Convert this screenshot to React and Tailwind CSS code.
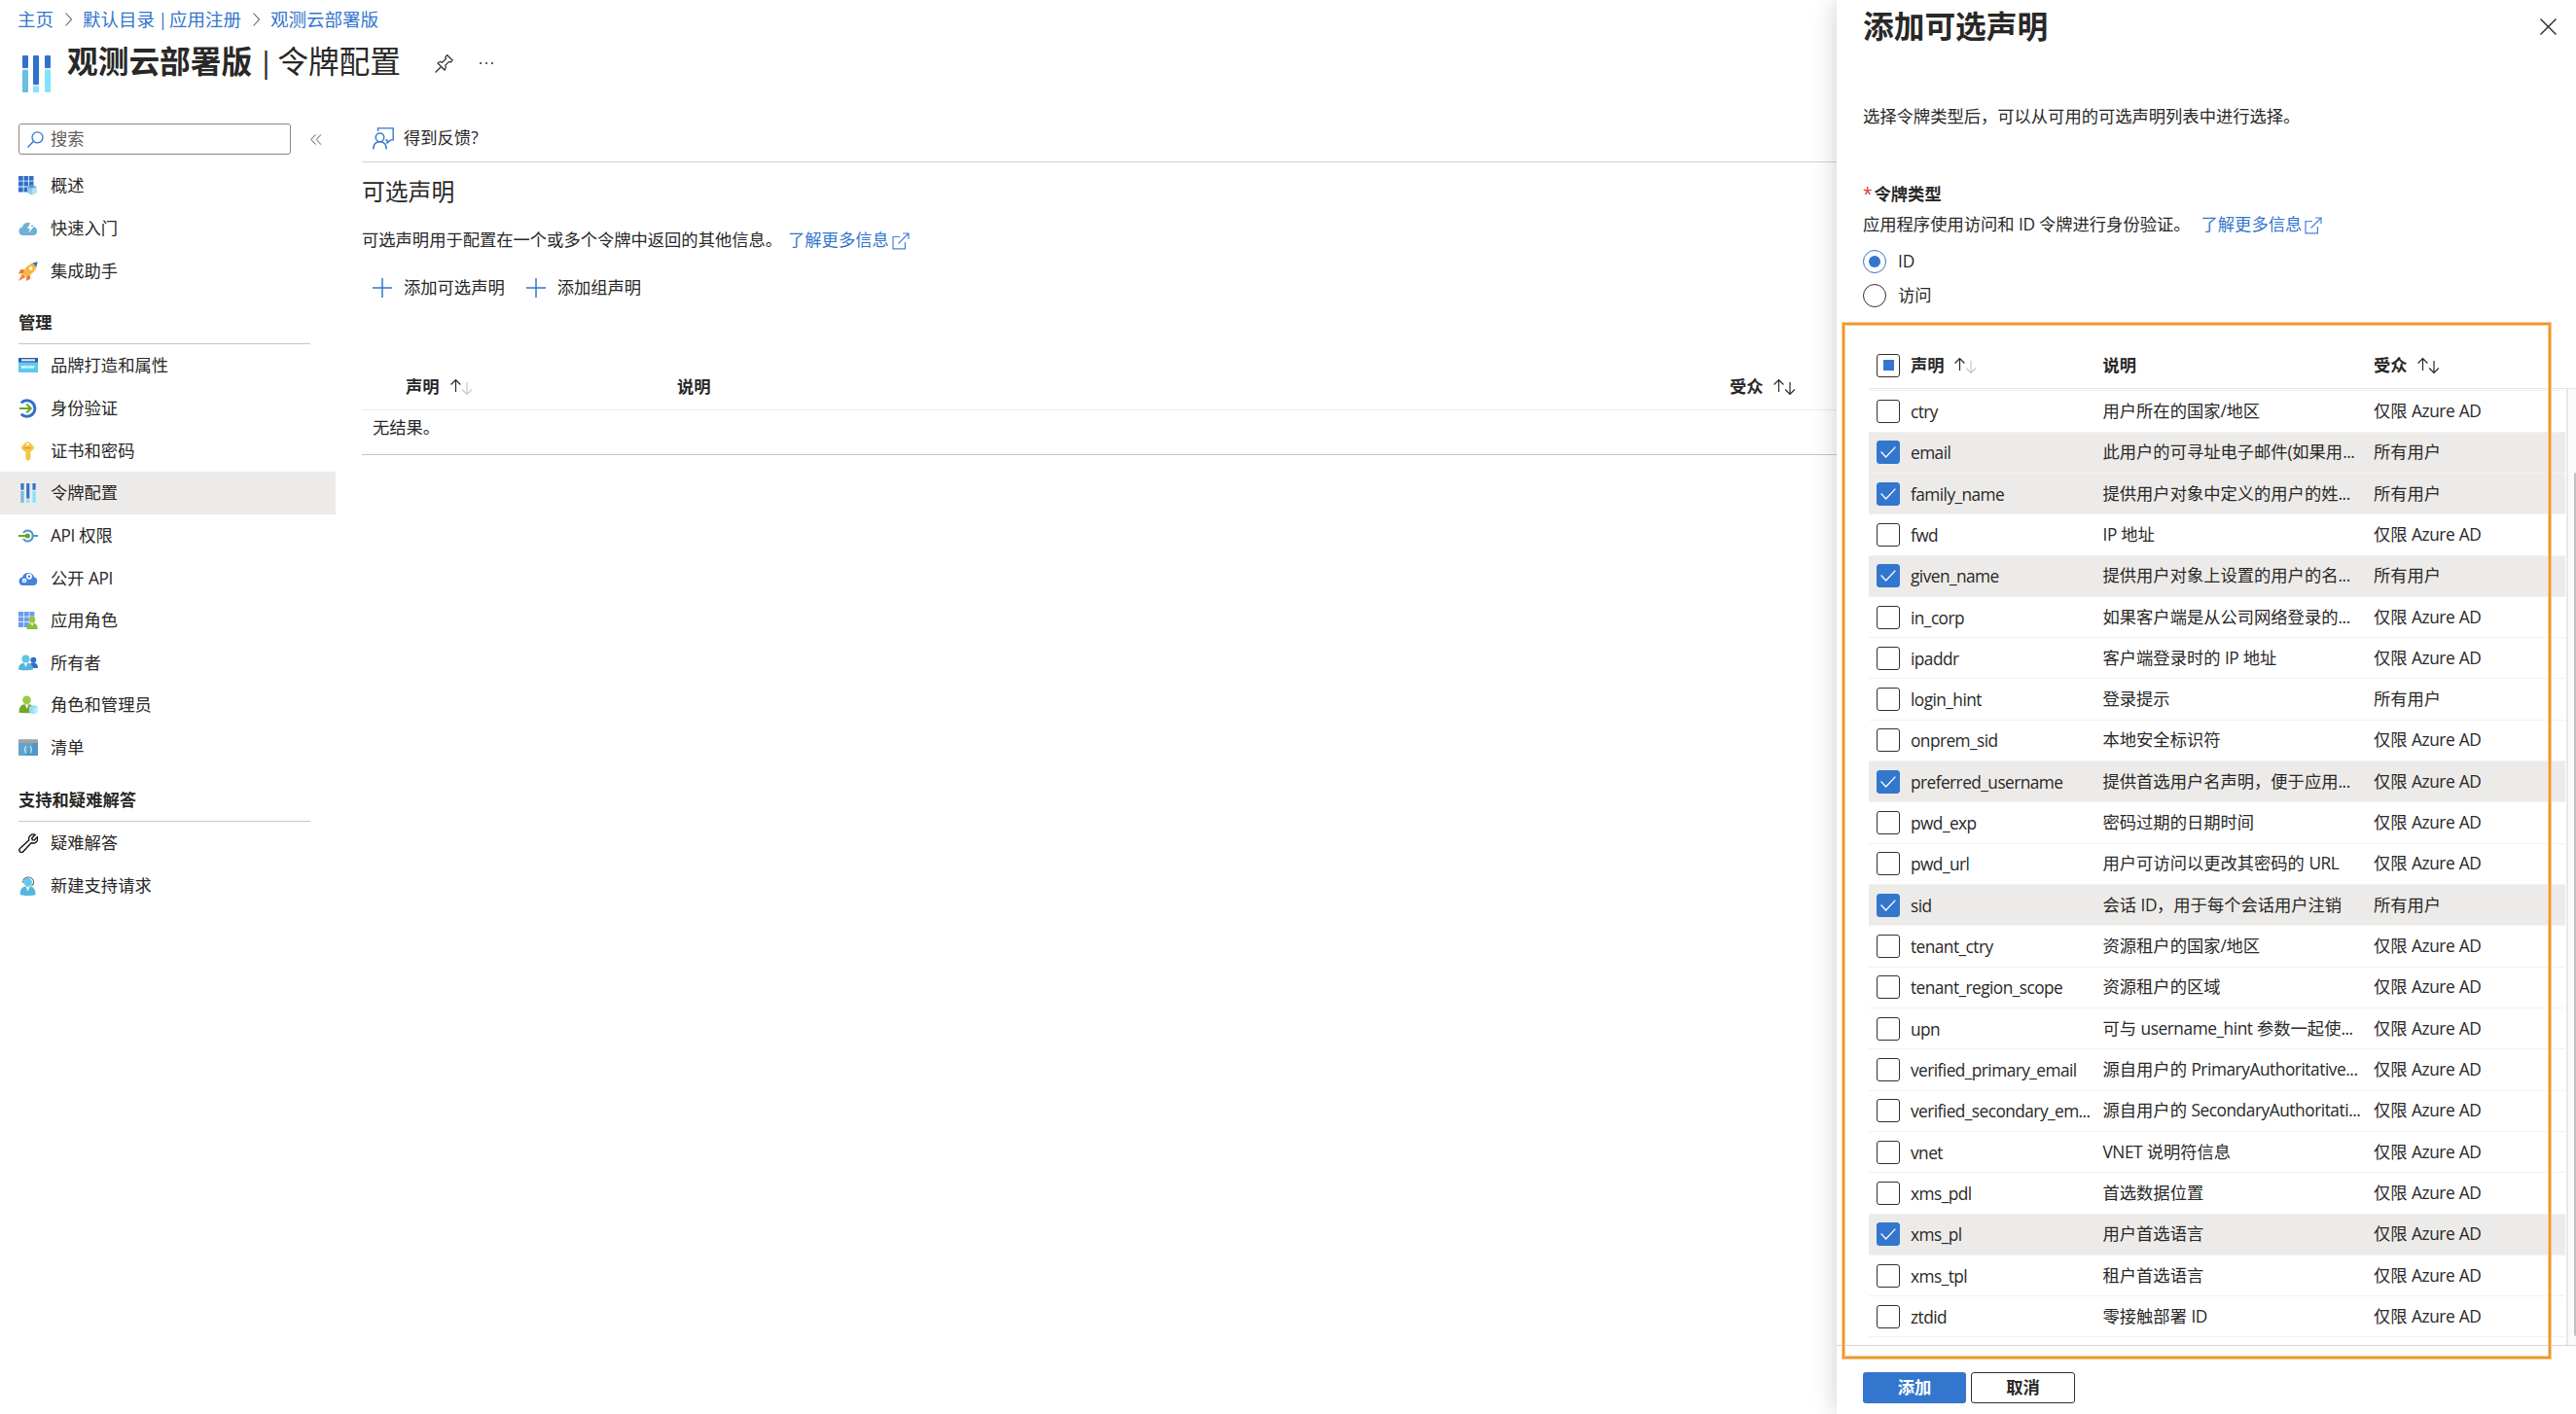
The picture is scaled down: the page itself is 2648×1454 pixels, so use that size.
import { useState } from 'react'

const FONT = "font-['Open_Sans','Noto_Sans_CJK_SC',sans-serif]"

/* ---------- icons ---------- */

const SlidersIcon = ({ className }) => (
  <svg viewBox="0 0 29 38" className={className}>
    <rect x="0" y="0" width="6" height="13" rx="1" fill="#2f72cb" />
    <rect x="11" y="0" width="6" height="30" rx="1" fill="#2f72cb" />
    <rect x="23" y="0" width="6" height="13" rx="1" fill="#2f72cb" />
    <rect x="0" y="15" width="6" height="23" rx="1" fill="#68bfe0" />
    <rect x="11" y="32" width="6" height="6" rx="1" fill="#7fe3fb" />
    <rect x="23" y="15" width="6" height="23" rx="1" fill="#7fe3fb" />
    <path d="M0 13.5h6v1.5H0zM10.500 30h7v2h-7zM23 13.500h6v1.500h-6z" fill="#dfe3e8" />
  </svg>
)

const OverviewIcon = () => (
  <svg viewBox="0 0 20 20" className="size-5">
    <path d="M0 0h4.700v4.700H0zM5.500 0h4.700v4.700H5.500zM11 0h4.500v4.700H11zM0 5.600h4.700v4.900H0zM5.500 5.600h4.700v4.900H5.500zM11 5.600h4.500v4.900H11zM0 11.400h4.700v5H0zM5.500 11.400h4.700v5H5.500z" fill="#2f6fc9" />
    <path d="M13.800 9.200 18.600 11v6L13.800 19.500 9 17v-6z" fill="#8cc8e4" />
    <path d="M13.800 9.200 18.600 11l-4.800 2L9 11z" fill="#5aa3d0" />
    <path d="M13.800 13 18.600 11v6l-4.800 2.500z" fill="#b5dff0" />
  </svg>
)

const QuickstartIcon = () => (
  <svg viewBox="0 0 20 20" className="size-5">
    <path d="M4.500 17a4.300 4.300 0 0 1-.6-8.500A6 6 0 0 1 15.300 8 4.600 4.600 0 0 1 15.600 17z" fill="#6fb1d6" />
    <path d="M13 3 9 10h2.700l-1.200 4.500L15.800 8H13l2-5z" fill="#fff" />
  </svg>
)

const RocketIcon = () => (
  <svg viewBox="0 0 20 20" className="size-5">
    <path d="M7 8.500 2.500 8 0 12.500l5-.5zM11.500 13l.8 4.500L8 20l.3-5z" fill="#e8762c" />
    <path d="M4 12 0 20l7.500-4z" fill="#f08a3c" />
    <path d="M4.500 12.500C6 6.500 11 1.500 19.500.300 19 8.500 14 13.500 8 15.800z" fill="#f5b83d" />
    <path d="M14.500 1.600 19.500.300 18.400 5.500z" fill="#2f6fc9" />
    <circle cx="12.700" cy="7" r="1.900" fill="#fdf3e0" />
  </svg>
)

const BrandingIcon = () => (
  <svg viewBox="0 0 20 20" className="size-5">
    <path d="M0 2h20v5H0z" fill="#2b5faa" />
    <path d="M3 3.300h14v2H3z" fill="#e6eefb" />
    <path d="M0 6.500h20V17H0z" fill="#5ec9ee" />
    <path d="m2.800 9.800 1.300 3 1-2.500 1 2.500 1.200-3 1.200 3 1-2.500 1 2.500 1.200-3 1.200 3 1-2.500 1 2.500 1.300-3" fill="none" stroke="#fff" strokeWidth=".9" />
  </svg>
)

const AuthIcon = () => (
  <svg viewBox="0 0 20 20" className="size-5" fill="none">
    <path d="M2.800 4.300A8.200 8.200 0 1 1 2.800 15.700" stroke="#2f6fc9" strokeWidth="3" />
    <path d="M1 10h11.500M8.300 5.500 12.800 10l-4.500 4.500" stroke="#6aa329" strokeWidth="2" />
  </svg>
)

const KeyIcon = () => (
  <svg viewBox="0 0 20 20" className="size-5">
    <path d="M9.500 0c1 0 6.500 4.800 6.500 6.200 0 1.600-2.500 3.600-4 4.600v1l1 1-1 1.200 1 1.200-1 1.200.9 1.100L9.800 20 7.500 18v-7.200C5.500 9.800 3 7.800 3 6.200 3 4.800 8.500 0 9.500 0z" fill="#f6c445" />
    <circle cx="9.500" cy="2.800" r="1.300" fill="#fff" />
    <path d="M6 6h7v1.300H6z" fill="#dd9d2b" />
  </svg>
)

const ApiPermIcon = () => (
  <svg viewBox="0 0 20 20" className="size-5" fill="none">
    <path d="M5 7a5.200 5.200 0 0 1 9.600 3A5.200 5.200 0 0 1 5 13M14.800 10H20" stroke="#4a98cc" strokeWidth="2" />
    <path d="M0 10h8" stroke="#6aa329" strokeWidth="2" />
    <circle cx="9.300" cy="10" r="2.600" fill="#6aa329" />
  </svg>
)

const ExposeApiIcon = () => (
  <svg viewBox="0 0 20 20" className="size-5">
    <path d="M4.500 17A4.300 4.300 0 0 1 4 8.500 6.300 6.300 0 0 1 16 8.300 4.500 4.500 0 0 1 15.800 17z" fill="#4583dc" />
    <circle cx="11" cy="7.800" r="2.100" fill="none" stroke="#fff" strokeWidth="1.700" />
    <circle cx="6" cy="12" r="1.600" fill="none" stroke="#fff" strokeWidth="1.500" />
  </svg>
)

const AppRolesIcon = () => (
  <svg viewBox="0 0 20 20" className="size-5">
    <path d="M0 1h5v4.800H0zM5.700 1h5v4.800h-5zM11.400 1h5v4.800h-5zM0 6.500h5v4.800H0zM5.700 6.500h5v4.800h-5zM11.400 6.500h5v4.800h-5zM0 12h5v5H0zM5.700 12h5v5h-5z" fill="#6b9ceb" />
    <circle cx="14" cy="9.300" r="3.200" fill="#8fc93a" />
    <path d="M8.500 19c0-4.500 2-6.800 5.500-6.800s5.700 2.300 5.700 6.800z" fill="#86bf34" />
    <path d="m12.300 12.500 1.800 3.500 1.700-3.500z" fill="#eef7dd" />
  </svg>
)

const OwnersIcon = () => (
  <svg viewBox="0 0 20 20" className="size-5">
    <circle cx="15.300" cy="6.800" r="3" fill="#2f6fc9" />
    <path d="M10.500 15c0-3.600 1.600-5.400 4.700-5.400S20 11.400 20 15z" fill="#2f6fc9" />
    <circle cx="7.500" cy="5.500" r="4" fill="#5fc5ea" />
    <path d="M0 16.500C0 12 2.500 9.500 7.500 9.500s7.500 2.500 7.500 7c-1 1-14 1-15 0z" fill="#55b4dc" />
    <path d="m5.500 9.500 2 4.500 2-4.500z" fill="#eaf7fc" />
  </svg>
)

const RolesIcon = () => (
  <svg viewBox="0 0 20 20" className="size-5">
    <circle cx="8.500" cy="4.800" r="4.400" fill="#9acb45" />
    <path d="M.5 17.500c0-5.500 2-8.500 8-8.500s7.500 3 7.500 8.500c-1 1-14.500 1-15.500 0z" fill="#76a52c" />
    <path d="M6.500 9.300 8.600 14l2.100-4.700z" fill="#eef5df" />
    <path d="m15.500 10 4.500 1.800v5.400L15.500 19.500 11 17.200v-5.400z" fill="#8fe0f6" />
    <path d="M15.500 13.800 20 11.800v5.400l-4.500 2.300z" fill="#b9eefb" />
  </svg>
)

const ManifestIcon = () => (
  <svg viewBox="0 0 20 20" className="size-5">
    <path d="M0 1.500h20V18H0z" fill="#5296c6" />
    <path d="M0 1.500h20v3.500H0z" fill="#a3a3a3" />
    <path d="M0 5h15L7 18H0z" fill="#61a4d2" />
    <path d="M8 8.500c-1.500 0-.8 1.200-.9 2.200 0 .8-.6 1-1.100 1 .5 0 1.100.3 1.100 1.100.1 1-.6 2.200.9 2.200M12 8.500c1.500 0 .8 1.200.9 2.200 0 .8.600 1 1.100 1-.5 0-1.100.3-1.100 1.100-.1 1 .6 2.200-.9 2.200" fill="none" stroke="#fff" />
  </svg>
)

const WrenchIcon = () => (
  <svg viewBox="0 0 20 20" className="size-5" fill="none" stroke="#111" strokeWidth="1.400">
    <path d="M17.200 1.300 13.800 4.700l.4 1.900 1.900.4 3.200-3.300c.9 2.600-.2 5.200-2.600 6.100-1.200.4-2.300.3-3.400-.2L4.800 18.700a2.200 2.200 0 0 1-3.300 0 2.200 2.200 0 0 1 0-3.300l9.200-8.500c-.8-3.700 2.500-7.100 6.500-5.600z" />
  </svg>
)

const SupportIcon = () => (
  <svg viewBox="0 0 20 20" className="size-5">
    <path d="M4.500 7C3.800-.8 15.300-1 15.600 6.300c0 2-.8 3.200-2.600 3.500" fill="none" stroke="#6b6b6b" strokeWidth="1.100" />
    <circle cx="9.600" cy="6" r="4.300" fill="#5fc8ee" />
    <path d="M1.700 19c0-6.500 2.500-8.700 8-8.700s7.800 2.200 7.800 8.700c-1 1.300-15 1.300-15.800 0z" fill="#54b7de" />
    <path d="m7.600 10.800 2 5 2.100-5z" fill="#eaf7fc" />
  </svg>
)

const ExternalIcon = () => (
  <svg viewBox="0 0 18 18" className="mt-0.5 size-[18px]" fill="none" stroke="#4a80d8" strokeWidth="1.200">
    <path d="M8 4.500H1v12.400h12.400V10M11 1h6v6M17 1 6.500 11.500" />
  </svg>
)

const SortIcon = ({ down = '#292827' }) => (
  <svg viewBox="0 0 22 18" className="h-[18px] w-[22px]" fill="none" strokeWidth="1.200">
    <path d="M5.500 14V1.500M.6 6.500l4.900-5 4.900 5" stroke="#292827" />
    <path d="M17 4v12.500M12.100 11.500l4.900 5 4.900-5" stroke={down} />
  </svg>
)

const PlusIcon = () => (
  <svg viewBox="0 0 20 20" className="size-5" fill="none" stroke="#3376cd" strokeWidth="1.500">
    <path d="M10 0v20M0 10h20" />
  </svg>
)

const ChevronIcon = () => (
  <svg viewBox="0 0 7 14" className="h-[14px] w-[7px]" fill="none" stroke="#605e5c" strokeWidth="1.100">
    <path d="m.5.500 6 6.500-6 6.500" />
  </svg>
)

/* ---------- data ---------- */

const topItems = [
  { label: '概述', Icon: OverviewIcon },
  { label: '快速入门', Icon: QuickstartIcon },
  { label: '集成助手', Icon: RocketIcon },
]

const manageItems = [
  { label: '品牌打造和属性', Icon: BrandingIcon },
  { label: '身份验证', Icon: AuthIcon },
  { label: '证书和密码', Icon: KeyIcon },
  { label: '令牌配置', Icon: () => <SlidersIcon className="ml-0.5 h-5 w-4" />, active: true },
  { label: 'API 权限', Icon: ApiPermIcon },
  { label: '公开 API', Icon: ExposeApiIcon },
  { label: '应用角色', Icon: AppRolesIcon },
  { label: '所有者', Icon: OwnersIcon },
  { label: '角色和管理员', Icon: RolesIcon },
  { label: '清单', Icon: ManifestIcon },
]

const supportItems = [
  { label: '疑难解答', Icon: WrenchIcon },
  { label: '新建支持请求', Icon: SupportIcon },
]

const AAD = '仅限 Azure AD'
const ALL = '所有用户'

const claims = [
  ['ctry', '用户所在的国家/地区', AAD],
  ['email', '此用户的可寻址电子邮件(如果用...', ALL],
  ['family_name', '提供用户对象中定义的用户的姓...', ALL],
  ['fwd', 'IP 地址', AAD],
  ['given_name', '提供用户对象上设置的用户的名...', ALL],
  ['in_corp', '如果客户端是从公司网络登录的...', AAD],
  ['ipaddr', '客户端登录时的 IP 地址', AAD],
  ['login_hint', '登录提示', ALL],
  ['onprem_sid', '本地安全标识符', AAD],
  ['preferred_username', '提供首选用户名声明，便于应用...', AAD],
  ['pwd_exp', '密码过期的日期时间', AAD],
  ['pwd_url', '用户可访问以更改其密码的 URL', AAD],
  ['sid', '会话 ID，用于每个会话用户注销', ALL],
  ['tenant_ctry', '资源租户的国家/地区', AAD],
  ['tenant_region_scope', '资源租户的区域', AAD],
  ['upn', '可与 username_hint 参数一起使...', AAD],
  ['verified_primary_email', '源自用户的 PrimaryAuthoritative...', AAD],
  ['verified_secondary_em...', '源自用户的 SecondaryAuthoritati...', AAD],
  ['vnet', 'VNET 说明符信息', AAD],
  ['xms_pdl', '首选数据位置', AAD],
  ['xms_pl', '用户首选语言', AAD],
  ['xms_tpl', '租户首选语言', AAD],
  ['ztdid', '零接触部署 ID', AAD],
]

/* ---------- pieces ---------- */

function Mixed({ text }) {
  return (
    <span className="whitespace-pre">
      {text.split(/([\x21-\x7e]+)/).map((part, i) =>
        i % 2 ? <span key={i} className="tracking-[-0.45px]">{part}</span> : part
      )}
    </span>
  )
}

function NavGroup({ items }) {
  return items.map(({ label, Icon, active }) => (
    <a
      key={label}
      className={`flex h-[43.64px] items-center pl-[19px] pt-px ${active ? 'bg-[#edebe9]' : ''}`}
    >
      <span className="flex w-[33px] items-center"><Icon /></span>
      <Mixed text={label} />
    </a>
  ))
}

function NavHeading({ children }) {
  return (
    <div className="ml-[19px] flex h-[54.300px] w-[300px] items-center border-b border-[#c8c6c4] pt-[11px] font-semibold">
      {children}
    </div>
  )
}

function Checkbox({ checked, mixed, onClick }) {
  return (
    <button
      onClick={onClick}
      className={`flex size-6 shrink-0 items-center justify-center rounded-[3px] border ${
        checked ? 'border-[#3376cd] bg-[#3376cd]' : 'border-[#323130] bg-white'
      }`}
    >
      {checked && (
        <svg viewBox="0 0 16 12" className="h-3 w-4" fill="none" stroke="#fff" strokeWidth="1.300">
          <path d="m.6 5.500 5 5.500L15.400.600" />
        </svg>
      )}
      {mixed && <span className="size-[11px] bg-[#3376cd]" />}
    </button>
  )
}

function LearnMore() {
  return (
    <a className="flex items-center gap-[3px] text-[#3376cd]">
      了解更多信息
      <ExternalIcon />
    </a>
  )
}

function Radio({ checked, label, onClick }) {
  return (
    <button onClick={onClick} className="flex h-[34.400px] items-center gap-3">
      <span
        className={`flex size-6 items-center justify-center rounded-full border ${
          checked ? 'border-[#3376cd]' : 'border-[#323130]'
        }`}
      >
        {checked && <span className="size-3 rounded-full bg-[#3376cd]" />}
      </span>
      {label}
    </button>
  )
}

function Sidebar() {
  return (
    <nav className="w-[345px] shrink-0">
      <div className="mt-[11px] flex h-8 items-center pl-[19px]">
        <div className="flex h-8 w-[280px] items-center rounded-[3px] border border-[#8a8886] pl-2 text-[#605e5c]">
          <svg viewBox="0 0 17 17" className="mr-[7px] size-[17px]" fill="none" stroke="#3376cd" strokeWidth="1.300">
            <circle cx="10.500" cy="6.300" r="5.500" />
            <path d="m6.500 10.300-6 6.200" />
          </svg>
          搜索
        </div>
        <svg viewBox="0 0 12 11" className="ml-5 h-[11px] w-3" fill="none" stroke="#605e5c" strokeWidth="1">
          <path d="M5.500.300.800 5.500l4.700 5.200M11 .300 6.300 5.500l4.700 5.200" />
        </svg>
      </div>
      <div className="pt-[10px]">
        <NavGroup items={topItems} />
        <NavHeading>管理</NavHeading>
        <NavGroup items={manageItems} />
        <NavHeading>支持和疑难解答</NavHeading>
        <NavGroup items={supportItems} />
      </div>
    </nav>
  )
}

function Main() {
  return (
    <main className="ml-[27px] min-w-0 flex-1">
      <div className="flex h-[51px] items-center border-b border-[#d2d0ce] pl-[11px] pt-[2px]">
        <svg viewBox="0 0 22 23" className="mr-2.5 h-[23px] w-[22px]" fill="none" stroke="#3376cd" strokeWidth="1.400">
          <path d="M5.500 4V.900h15.700v12h-2.500L15 16v-3.100h-1.800" />
          <circle cx="7.500" cy="10.300" r="4.300" />
          <path d="M.8 22.600c0-5 2.700-7.800 6.700-7.800s6.700 2.800 6.700 7.800" />
        </svg>
        得到反馈?
      </div>
      <h2 className="mt-[12px] text-[23.800px] leading-9">可选声明</h2>
      <div className="mt-[18px] flex h-7 items-center">
        可选声明用于配置在一个或多个令牌中返回的其他信息。
        <span className="w-[6px]" />
        <LearnMore />
      </div>
      <div className="mt-[21px] flex h-7 items-center pl-[11px]">
        <PlusIcon />
        <span className="ml-3">添加可选声明</span>
        <span className="w-[22px]" />
        <PlusIcon />
        <span className="ml-3">添加组声明</span>
      </div>
      <div className="mt-[64px] flex h-[48px] items-center border-b border-[#edebe9] pl-[45px] font-semibold">
        <div className="flex w-[279px] items-center gap-[11px]">声明 <SortIcon down="#c8c6c4" /></div>
        <div className="w-[1082px]">说明</div>
        <div className="flex items-center gap-[10px]">受众 <SortIcon /></div>
      </div>
      <div className="flex h-[46px] items-center border-b border-[#c8c6c4] pb-[9px] pl-[11px]">无结果。</div>
    </main>
  )
}

function ClaimsPanel() {
  const [tokenType, setTokenType] = useState('ID')
  const [selected, setSelected] = useState([
    'email', 'family_name', 'given_name', 'preferred_username', 'sid', 'xms_pl',
  ])

  const toggle = (name) =>
    setSelected(selected.includes(name) ? selected.filter((n) => n !== name) : [...selected, name])

  return (
    <aside className="relative flex h-[1454px] w-[760px] shrink-0 flex-col bg-white shadow-[0_0_24px_rgba(0,0,0,0.2)]">
      <div className="flex h-[54px] items-center justify-between pl-[27px] pr-5">
        <h1 className="text-[31.700px] font-semibold">添加可选声明</h1>
        <svg viewBox="0 0 17 17" className="size-[17px]" fill="none" stroke="#292827" strokeWidth="1.400">
          <path d="m.5.500 16 16M16.500.500l-16 16" />
        </svg>
      </div>

      <div className="flex h-[198px] flex-col pl-[27px] pt-[52px]">
        <p className="h-7 leading-7">选择令牌类型后，可以从可用的可选声明列表中进行选择。</p>
        <p className="mt-[52px] flex h-7 items-center gap-[2px] font-semibold">
          <span className="font-normal text-[#e3342f]">*</span>令牌类型
        </p>
        <div className="mt-[3px] flex h-7 items-center">
          <Mixed text="应用程序使用访问和 ID 令牌进行身份验证。" />
          <span className="w-[11px]" />
          <LearnMore />
        </div>
      </div>
      <div className="flex h-[80px] flex-col items-start pl-[27px]">
        <Radio checked={tokenType === 'ID'} label="ID" onClick={() => setTokenType('ID')} />
        <Radio checked={tokenType === 'access'} label="访问" onClick={() => setTokenType('access')} />
      </div>

      <div className="ml-[33px] flex h-[68px] items-center border-b border-[#e6e6e6] pl-2 pt-[20px] font-semibold">
        <Checkbox mixed />
        <div className="ml-[11px] flex w-[197.500px] items-center gap-[10px]">声明 <SortIcon down="#c8c6c4" /></div>
        <div className="w-[278.500px]">说明</div>
        <div className="flex items-center gap-[10px]">受众 <SortIcon /></div>
      </div>

      <div className="flex h-[984px] border-b border-[#d6d6d6] pl-[33px]">
        <div className="mt-[1.300px] w-[716px] border-t border-[#f3f2f1]">
          {claims.map(([name, desc, audience]) => {
            const on = selected.includes(name)
            return (
              <div
                key={name}
                className={`flex h-[42.320px] items-center whitespace-nowrap border-b border-[#f3f2f1] pl-2 ${on ? 'bg-[#edebe9]' : ''}`}
              >
                <Checkbox checked={on} onClick={() => toggle(name)} />
                <div className="ml-[11px] w-[197.500px] pt-[2px] tracking-[-0.55px]">{name}</div>
                <div className="w-[278.500px]"><Mixed text={desc} /></div>
                <div><Mixed text={audience} /></div>
              </div>
            )
          })}
        </div>
        <div className="ml-px flex-1 border-l-2 border-[#e8e8e8] bg-[#fafafa] pl-[6px]">
          <div className="mt-[86px] h-[888px] rounded-l-full bg-[#c1c1c1]" />
        </div>
      </div>

      <div className="flex gap-[5px] pl-[27px] pt-[27px] font-semibold">
        <button className="h-8 w-[106px] rounded-[3px] bg-[#3376cd] text-white">添加</button>
        <button className="h-8 w-[107px] rounded-[3px] border border-[#323130]">取消</button>
      </div>

      {/* highlight frame around the claims list */}
      <div className="pointer-events-none absolute left-[6px] top-[332px] h-[1065px] w-[728px] border-2 border-[#ef9634] shadow-[0_0_0_1px_#f9c88a,inset_0_0_0_1px_#f9c88a]" />
    </aside>
  )
}

export default function App() {
  return (
    <div className={`flex h-[1454px] w-[2648px] overflow-hidden bg-white text-[17.300px] leading-6 text-[#292827] ${FONT}`}>
      <div className="flex min-w-0 flex-1 flex-col">
        <div className="flex h-[39px] items-center pl-[18px] text-[18.500px] text-[#3376cd]">
          主页
          <span className="ml-[12px] mr-[11px]"><ChevronIcon /></span>
          <span>默认目录<span className="tracking-[-1.6px]"> | </span>应用注册</span>
          <span className="ml-[12px] mr-[11px]"><ChevronIcon /></span>
          观测云部署版
        </div>
        <div className="flex h-[77px] pl-[23px]">
          <SlidersIcon className="mt-[18px] h-[38px] w-[29px]" />
          <h1 className="ml-[17px] h-[50px] text-[31.700px] leading-[48px]">
            <span className="font-semibold">观测云部署版</span>
            <span className="tracking-[-2.600px]"> | </span>令牌配置
          </h1>
          <svg viewBox="0 0 19 19" className="ml-[35px] mt-[17px] size-[19px]" fill="none" stroke="#292827" strokeWidth="1.200">
            <path d="m.5 18.500 6-6M3 9l7 7c1.400-1.600 1.600-3 .8-4.800l3.800-3.800 1.600.6 2-2L12.800.700l-2 2 .6 1.600-3.700 3.900C6 7.300 4.400 7.500 3 9z" />
          </svg>
          <div className="ml-[27px] mt-[25px] flex h-0.5 gap-1">
            <span className="size-0.5 bg-[#605e5c]" />
            <span className="size-0.5 bg-[#605e5c]" />
            <span className="size-0.5 bg-[#605e5c]" />
          </div>
        </div>
        <div className="flex flex-1">
          <Sidebar />
          <Main />
        </div>
      </div>
      <ClaimsPanel />
    </div>
  )
}
